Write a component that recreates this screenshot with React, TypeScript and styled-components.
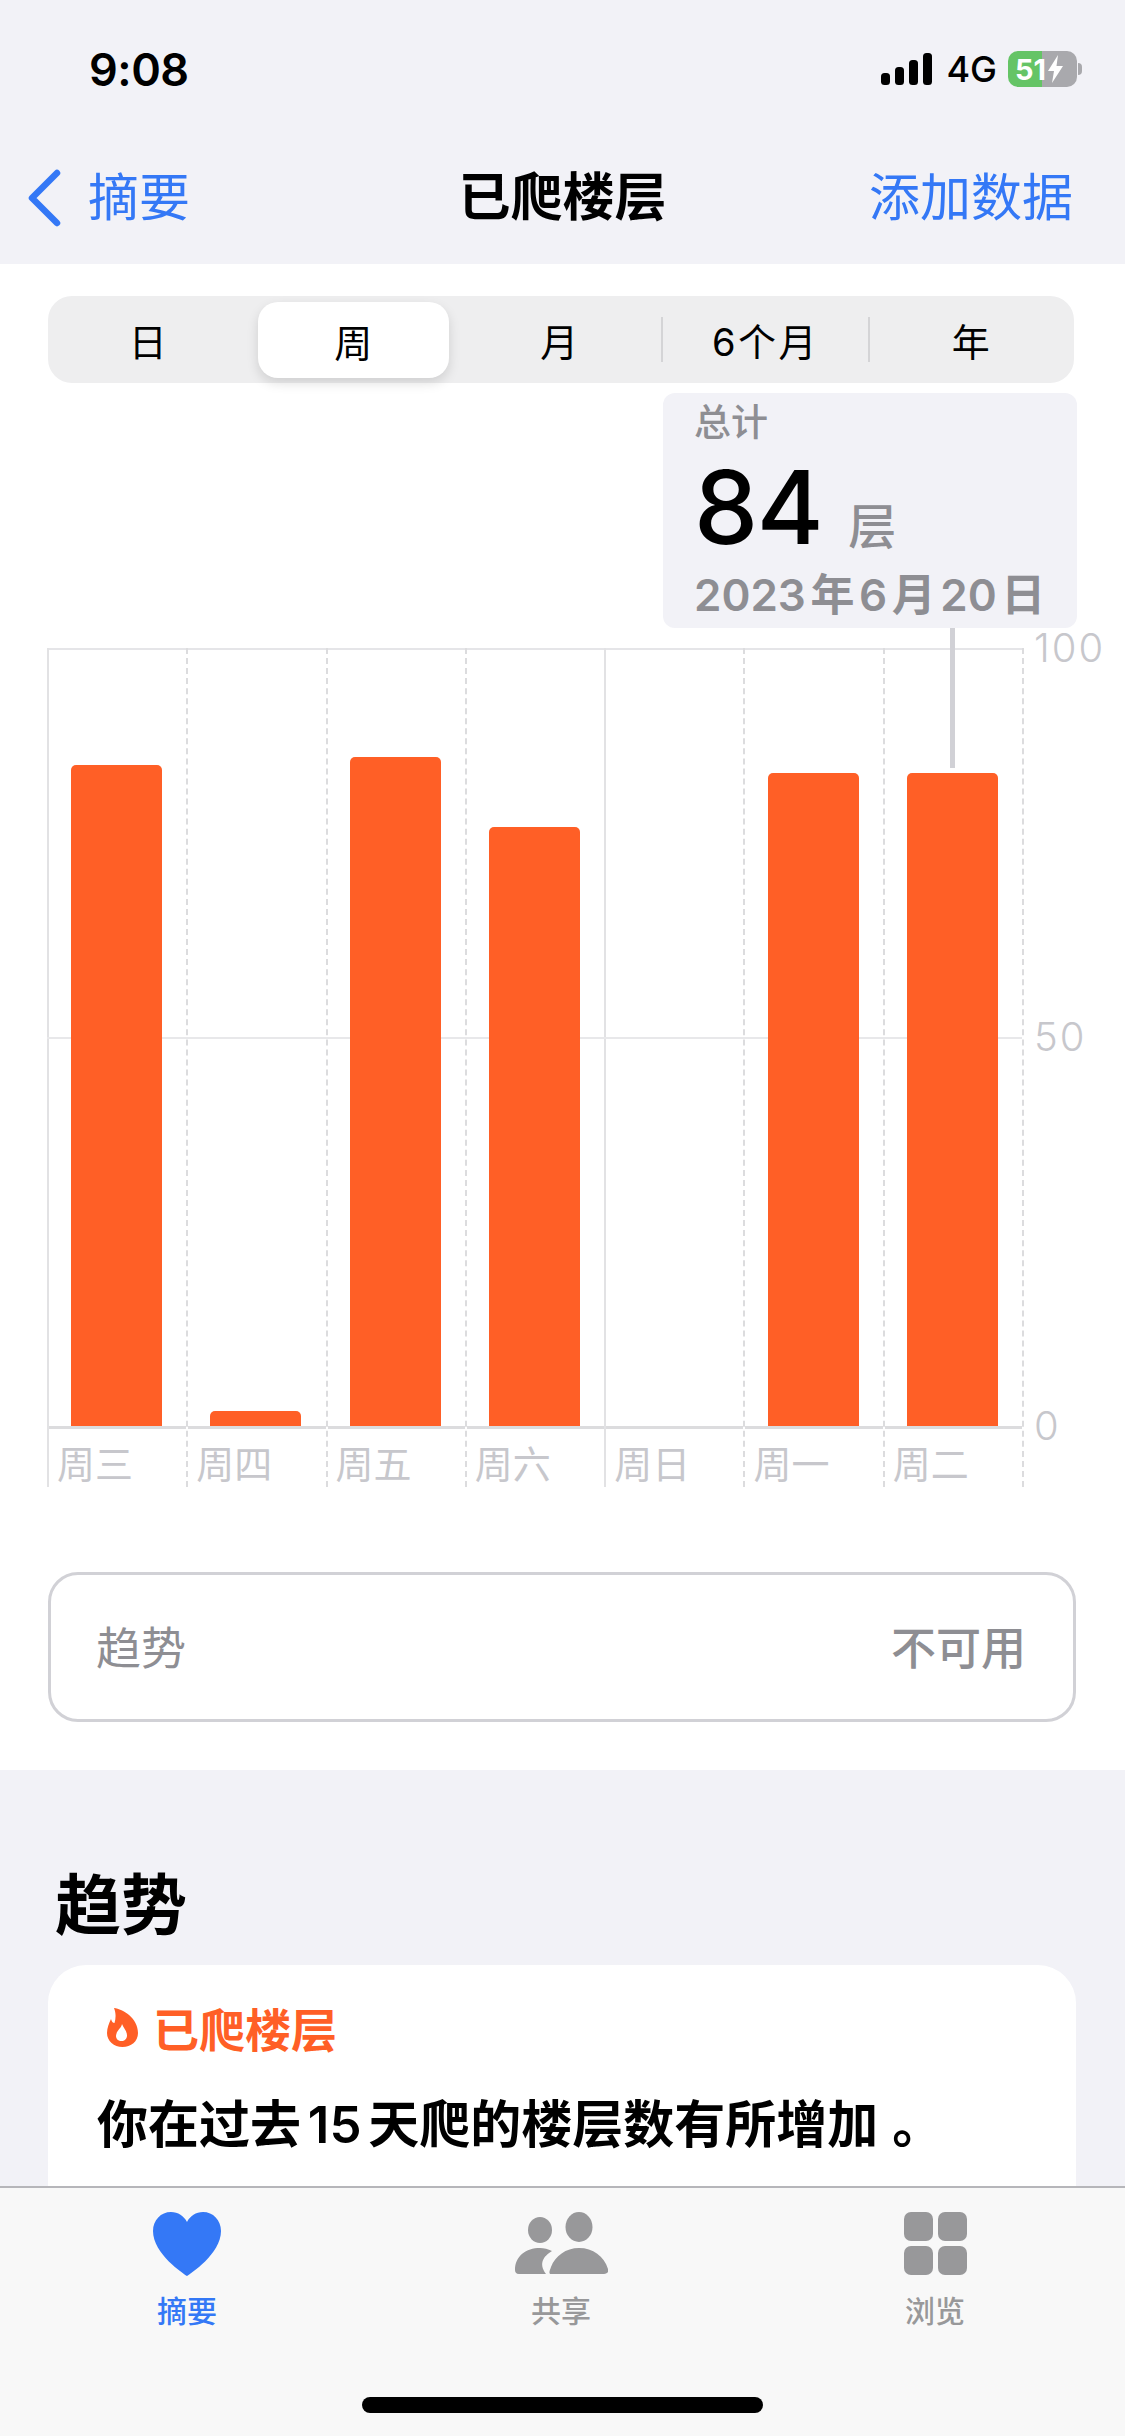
import React from "react";
import styled, { createGlobalStyle } from "styled-components";

const GlobalStyle = createGlobalStyle`
  html, body { margin: 0; padding: 0; background: #f2f2f7; }
  * { box-sizing: border-box; }
  body { font-family: Inter, "Noto Sans CJK SC", sans-serif; }
`;

const Page = styled.div`
  width: 1125px;
  height: 2436px;
  display: flex;
  flex-direction: column;
  overflow: hidden;
  background: #f2f2f7;
  color: #000;
`;

const Header = styled.header`
  height: 264px;
  flex: none;
  padding-top: 48px;
`;

const StatusRow = styled.div`
  height: 42px;
  display: flex;
  align-items: center;
  justify-content: space-between;
  padding: 0 48px 0 89px;
`;

const Clock = styled.div`
  font-size: 45px;
  font-weight: 600;
  letter-spacing: -0.5px;
`;

const StatusIcons = styled.div`
  display: flex;
  align-items: center;
`;

const Network = styled.span`
  font-size: 36px;
  font-weight: 500;
  margin: 0 11px 0 14px;
`;

const Battery = styled.div`
  position: relative;
  width: 69px;
  height: 36px;
  border-radius: 10px;
  background: linear-gradient(90deg, #65c466 50%, #a9a9ad 50%);
  display: flex;
  align-items: center;
  padding-left: 7px;
  gap: 1px;
  color: #fff;
  font-size: 29px;
  font-weight: 700;
  &::after {
    content: "";
    position: absolute;
    right: -5px;
    top: 12px;
    width: 4px;
    height: 12px;
    border-radius: 0 4px 4px 0;
    background: #a9a9ad;
  }
`;

const NavRow = styled.nav`
  height: 60px;
  margin-top: 78px;
  display: grid;
  grid-template-columns: 1fr auto 1fr;
  align-items: center;
  padding: 0 52px;
`;

const BackLink = styled.div`
  display: flex;
  align-items: center;
  gap: 27px;
  margin-left: -24px;
  color: #3478f6;
  font-size: 51px;
  line-height: 60px;
`;

const NavTitle = styled.div`
  font-size: 52px;
  line-height: 60px;
  font-weight: 600;
`;

const NavAction = styled.div`
  justify-self: end;
  color: #3478f6;
  font-size: 51px;
  line-height: 60px;
`;

const WhiteSection = styled.section`
  position: relative;
  flex: none;
  background: #fff;
  padding: 32px 0 48px;
`;

const Segmented = styled.div`
  margin-left: 48px;
  width: 1026px;
  height: 87px;
  border-radius: 24px;
  background: #eeeeef;
  display: grid;
  grid-template-columns: 200px 206px 207px 207px 206px;
`;

const Segment = styled.div<{ $active?: boolean; $divider?: boolean; $nudge?: boolean }>`
  position: relative;
  display: flex;
  align-items: center;
  justify-content: center;
  font-size: 38px;
  letter-spacing: 2.5px;
  margin: ${(p) => (p.$active ? "6px 5px 5px 10px" : "0")};
  padding-left: ${(p) => (p.$nudge ? "6px" : "2px")};
  border-radius: 20px;
  background: ${(p) => (p.$active ? "#fff" : "transparent")};
  box-shadow: ${(p) => (p.$active ? "0 5px 12px rgba(0,0,0,0.13)" : "none")};
  &::before {
    content: "";
    display: ${(p) => (p.$divider ? "block" : "none")};
    position: absolute;
    left: 0;
    top: 21px;
    width: 2px;
    height: 45px;
    background: #d4d4d6;
  }
`;

const Tooltip = styled.div`
  position: absolute;
  z-index: 2;
  left: 663px;
  top: 129px;
  width: 414px;
  height: 235px;
  border-radius: 12px;
  background: #f2f2f7;
  padding: 8px 0 0 31px;
  color: #8e8e93;
`;

const Connector = styled.div`
  position: absolute;
  left: 287px;
  top: 100%;
  width: 5px;
  height: 140px;
  background: #d1d1d6;
`;

const TooltipCaption = styled.div`
  font-size: 37px;
  line-height: 44px;
  font-weight: 500;
`;

const TooltipValue = styled.div`
  display: flex;
  align-items: baseline;
  gap: 26px;
  height: 110px;
  line-height: 110px;
  margin-top: 7px;
`;

const ValueNumber = styled.span`
  color: #000;
  font-size: 102px;
  font-weight: 500;
  letter-spacing: -1.5px;
`;

const ValueUnit = styled.span`
  font-size: 48px;
  font-weight: 500;
`;

const TooltipDate = styled.div`
  margin-top: 3px;
  font-size: 44px;
  line-height: 60px;
  font-weight: 600;
  word-spacing: -6.5px;
  white-space: nowrap;
`;

const Chart = styled.div`
  margin: 265px 0 0 47px;
  display: flex;
  align-items: flex-start;
`;

const Plot = styled.div`
  position: relative;
  width: 977px;
  display: grid;
  grid-template-columns: repeat(7, 1fr);
  border-right: 2px dashed #dcdcde;
`;

const MidLine = styled.div`
  position: absolute;
  left: 0;
  right: 0;
  top: 389px;
  height: 2px;
  background: #e8e8ea;
`;

const DayColumn = styled.div<{ $solid?: boolean }>`
  height: 839px;
  display: flex;
  flex-direction: column;
  border-left: 2px ${(p) => (p.$solid ? "solid #e2e2e4" : "dashed #dcdcde")};
`;

const BarSlot = styled.div`
  position: relative;
  z-index: 1;
  height: 781px;
  display: flex;
  align-items: flex-end;
  justify-content: center;
  padding-right: 2px;
  border-top: 2px solid #e5e5e8;
  border-bottom: 3px solid #dcdcde;
`;

const Bar = styled.div`
  width: 91px;
  background: #ff5f26;
  border-radius: 5px 5px 0 0;
`;

const DayLabel = styled.div`
  padding: 13px 0 0 8px;
  font-size: 38px;
  line-height: 45px;
  color: #c7c7cc;
  white-space: nowrap;
`;

const YAxis = styled.div`
  height: 778px;
  display: flex;
  flex-direction: column;
  justify-content: space-between;
  padding-left: 10px;
`;

const Tick = styled.div`
  height: 0;
  line-height: 0;
  font-size: 40px;
  letter-spacing: 2px;
  font-weight: 300;
  color: #c7c7cc;
`;

const TrendBox = styled.div`
  margin: 85px 0 0 48px;
  width: 1028px;
  height: 150px;
  border: 3px solid #d1d1d6;
  border-radius: 30px;
  display: flex;
  align-items: center;
  justify-content: space-between;
  padding: 0 47px 3px 45px;
  color: #8e8e93;
  font-size: 45px;
`;

const TrendValue = styled.span`
  font-weight: 500;
`;

const GraySection = styled.section`
  flex: 1;
  min-height: 0;
  overflow: hidden;
  padding: 95px 49px 0 48px;
`;

const SectionTitle = styled.h2`
  margin: 0 0 0 7px;
  font-size: 66px;
  line-height: 80px;
  font-weight: 700;
`;

const TrendCard = styled.article`
  margin-top: 20px;
  height: 400px;
  border-radius: 38px;
  background: #fff;
  padding: 37px 49px;
`;

const CardTitle = styled.div`
  display: flex;
  align-items: center;
  gap: 15px;
  margin-left: 10px;
  height: 50px;
  color: #ff5f26;
  font-size: 46px;
  font-weight: 600;
`;

const CardText = styled.p`
  margin: 43px 0 0;
  font-size: 51px;
  line-height: 60px;
  font-weight: 600;
  word-spacing: -6px;
  white-space: nowrap;
`;

const FullStop = styled.span`
  margin-left: 14px;
`;

const TabBar = styled.footer`
  flex: none;
  height: 250px;
  border-top: 2px solid #b6b6ba;
  background: #f8f8f8;
  padding: 24px 3px 0 0;
  display: flex;
  flex-direction: column;
`;

const TabRow = styled.div`
  display: grid;
  grid-template-columns: repeat(3, 1fr);
`;

const TabItem = styled.div<{ $active?: boolean }>`
  display: flex;
  flex-direction: column;
  align-items: center;
  color: ${(p) => (p.$active ? "#3478f6" : "#98989a")};
`;

const TabIcon = styled.svg`
  display: block;
  height: 64px;
`;

const TabLabel = styled.div`
  margin-top: 17px;
  font-size: 30px;
  line-height: 36px;
  font-weight: 500;
`;

const HomeIndicator = styled.div`
  margin: auto 0 23px 362px;
  width: 401px;
  height: 16px;
  border-radius: 8px;
  background: #000;
`;

const days = [
  { name: "周三", value: 661, solid: true },
  { name: "周四", value: 15 },
  { name: "周五", value: 669 },
  { name: "周六", value: 599 },
  { name: "周日", value: 0, solid: true },
  { name: "周一", value: 653 },
  { name: "周二", value: 653 },
];

const segments = [
  { label: "日" },
  { label: "周", active: true },
  { label: "月", nudge: true },
  { label: "6个月", divider: true },
  { label: "年", divider: true },
];

export default function App() {
  return (
    <Page>
      <GlobalStyle />
      <Header>
        <StatusRow>
          <Clock>9:08</Clock>
          <StatusIcons>
            <svg width="51" height="32" viewBox="0 0 51 32" fill="#000">
              <rect x="0" y="20" width="9" height="12" rx="3.5" />
              <rect x="14" y="14" width="9" height="18" rx="3.5" />
              <rect x="28" y="7" width="9" height="25" rx="3.5" />
              <rect x="42" y="0" width="9" height="32" rx="3.5" />
            </svg>
            <Network>4G</Network>
            <Battery>
              51
              <svg width="17" height="28" viewBox="0 0 17 28" fill="#fff">
                <path d="M11 0 L1 16 H7 L5 28 L16 11 H9.5 Z" />
              </svg>
            </Battery>
          </StatusIcons>
        </StatusRow>
        <NavRow>
          <BackLink>
            <svg width="33" height="58" viewBox="0 0 33 58" fill="none">
              <path d="M29 4 L4 29 L29 54" stroke="#3478f6" strokeWidth="6.5" strokeLinecap="round" strokeLinejoin="round" />
            </svg>
            摘要
          </BackLink>
          <NavTitle>已爬楼层</NavTitle>
          <NavAction>添加数据</NavAction>
        </NavRow>
      </Header>

      <WhiteSection>
        <Segmented>
          {segments.map((s) => (
            <Segment key={s.label} $active={s.active} $divider={s.divider} $nudge={s.nudge}>
              {s.label}
            </Segment>
          ))}
        </Segmented>

        <Tooltip>
          <TooltipCaption>总计</TooltipCaption>
          <TooltipValue>
            <ValueNumber>84</ValueNumber>
            <ValueUnit>层</ValueUnit>
          </TooltipValue>
          <TooltipDate>2023 年 6 月 20 日</TooltipDate>
          <Connector />
        </Tooltip>

        <Chart>
          <Plot>
            <MidLine />
            {days.map((d) => (
              <DayColumn key={d.name} $solid={d.solid}>
                <BarSlot>
                  {d.value > 0 && <Bar style={{ height: d.value }} />}
                </BarSlot>
                <DayLabel>{d.name}</DayLabel>
              </DayColumn>
            ))}
          </Plot>
          <YAxis>
            <Tick>100</Tick>
            <Tick>50</Tick>
            <Tick>0</Tick>
          </YAxis>
        </Chart>

        <TrendBox>
          <span>趋势</span>
          <TrendValue>不可用</TrendValue>
        </TrendBox>
      </WhiteSection>

      <GraySection>
        <SectionTitle>趋势</SectionTitle>
        <TrendCard>
          <CardTitle>
            <svg width="31" height="39" viewBox="0 0 31 39" fill="#ff5f26">
              <path
                fillRule="evenodd"
                d="M7 0 C16 1 31 10 31 25 C31 33.5 24 39 15.5 39 C7 39 0 33 0 25 C0 20 2 15 4 11 C5 14 6 15 7.5 15 C9 10 9 5 7 0 Z M15 16 C14.5 20 9 23 9 28 C9 31 11.5 33 14.5 33 C17.5 33 20 31 20 27.5 C20 23 16.5 20 15 16 Z"
              />
            </svg>
            已爬楼层
          </CardTitle>
          <CardText>你在过去 15 天爬的楼层数有所增加<FullStop>。</FullStop></CardText>
        </TrendCard>
      </GraySection>

      <TabBar>
        <TabRow>
          <TabItem $active>
            <TabIcon width="68" viewBox="0 0 68 64" fill="currentColor">
              <path d="M34 64 C31 62 0 42 0 19 C0 8 8 0 18 0 C25 0 31 4 34 10 C37 4 43 0 50 0 C60 0 68 8 68 19 C68 42 37 62 34 64 Z" />
            </TabIcon>
            <TabLabel>摘要</TabLabel>
          </TabItem>
          <TabItem>
            <TabIcon width="93" viewBox="0 0 93 64" fill="currentColor">
              <ellipse cx="25" cy="18" rx="12" ry="13" />
              <ellipse cx="64" cy="15" rx="13.5" ry="15" />
              <path d="M0 58 C0 44 11 36 25 36 C29 36 33 37 37 39 C29 44 23 51 31 62 H4 C1 62 0 60 0 58 Z" />
              <path d="M36 62 C33 62 35 58 36 55 C40 44 51 36 64 36 C78 36 89 44 93 57 C94 60 92 62 89 62 Z" />
            </TabIcon>
            <TabLabel>共享</TabLabel>
          </TabItem>
          <TabItem>
            <TabIcon width="63" viewBox="0 0 63 64" fill="currentColor">
              <rect x="0" y="0" width="29" height="29" rx="7" />
              <rect x="34" y="0" width="29" height="29" rx="7" />
              <rect x="0" y="34" width="29" height="29" rx="7" />
              <rect x="34" y="34" width="29" height="29" rx="7" />
            </TabIcon>
            <TabLabel>浏览</TabLabel>
          </TabItem>
        </TabRow>
        <HomeIndicator />
      </TabBar>
    </Page>
  );
}
